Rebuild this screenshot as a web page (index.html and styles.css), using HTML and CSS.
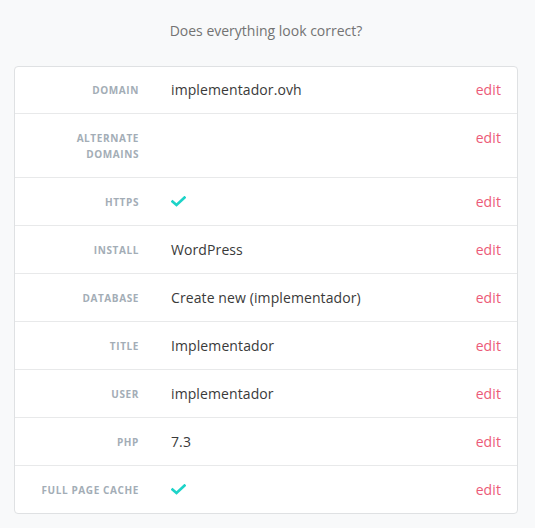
FILE: index.html
```html
<!DOCTYPE html>
<html lang="en">
<head>
<meta charset="utf-8">
<title>Review</title>
<link rel="stylesheet" href="styles.css">
</head>
<body>
<main class="page">
  <h1 class="title">Does everything look correct?</h1>
  <section class="card">
    <div class="row">
      <div class="label">Domain</div>
      <div class="value">implementador.ovh</div>
      <a class="edit" href="#">edit</a>
    </div>
    <div class="row">
      <div class="label">Alternate<br>domains</div>
      <div class="value"></div>
      <a class="edit" href="#">edit</a>
    </div>
    <div class="row">
      <div class="label">HTTPS</div>
      <div class="value"><svg class="check" width="15" height="11" viewBox="0 0 15 11"><path d="M1.5 5.5 L5.5 9 L13.5 1.5" fill="none" stroke="#1dd3c8" stroke-width="2.6" stroke-linecap="square"/></svg></div>
      <a class="edit" href="#">edit</a>
    </div>
    <div class="row">
      <div class="label">Install</div>
      <div class="value">WordPress</div>
      <a class="edit" href="#">edit</a>
    </div>
    <div class="row">
      <div class="label">Database</div>
      <div class="value">Create new (implementador)</div>
      <a class="edit" href="#">edit</a>
    </div>
    <div class="row">
      <div class="label">Title</div>
      <div class="value">Implementador</div>
      <a class="edit" href="#">edit</a>
    </div>
    <div class="row">
      <div class="label">User</div>
      <div class="value">implementador</div>
      <a class="edit" href="#">edit</a>
    </div>
    <div class="row">
      <div class="label">PHP</div>
      <div class="value">7.3</div>
      <a class="edit" href="#">edit</a>
    </div>
    <div class="row">
      <div class="label">Full page cache</div>
      <div class="value"><svg class="check" width="15" height="11" viewBox="0 0 15 11"><path d="M1.5 5.5 L5.5 9 L13.5 1.5" fill="none" stroke="#1dd3c8" stroke-width="2.6" stroke-linecap="square"/></svg></div>
      <a class="edit" href="#">edit</a>
    </div>
  </section>
</main>
</body>
</html>
```
FILE: styles.css
```css
html, body {
  margin: 0;
  padding: 0;
  background: #f8f9fa;
}
body {
  font-family: "Open Sans", "Liberation Sans", sans-serif;
  color: #333;
}
.page {
  width: 532px;
  padding: 21px 14px 14px;
  box-sizing: border-box;
}
.title {
  margin: 0 0 25px;
  text-align: center;
  font-size: 14px;
  font-weight: 400;
  line-height: 20px;
  color: #737373;
}
.card {
  background: #fff;
  border: 1px solid #dfe1e3;
  border-radius: 4px;
}
.row {
  display: flex;
  align-items: flex-start;
  padding: 15px 16px 15px 16px;
  border-top: 1px solid #e8e9ea;
}
.row:first-child {
  border-top: none;
  padding-top: 14px;
}
.label {
  width: 108px;
  flex: none;
  text-align: right;
  font-size: 10px;
  font-weight: 700;
  line-height: 16px;
  letter-spacing: 0.6px;
  text-transform: uppercase;
  color: #a3adb6;
  padding-top: 1px;
}
.value {
  flex: 1;
  margin-left: 32px;
  font-size: 14px;
  line-height: 17px;
  min-height: 17px;
  color: #3a3a3a;
  letter-spacing: 0.1px;
}
.check {
  display: block;
  margin-top: 3px;
}
.edit {
  font-size: 14px;
  line-height: 17px;
  color: #ec5a78;
  text-decoration: none;
  letter-spacing: 0.1px;
}
```
